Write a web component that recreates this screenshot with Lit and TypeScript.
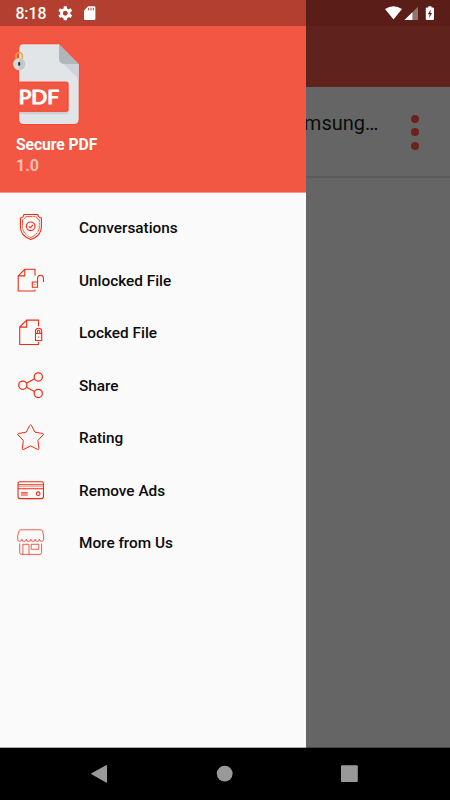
import { LitElement, html, svg, css } from "lit";
import { customElement } from "lit/decorators.js";

const items = [
  {
    label: "Conversations",
    icon: svg`<path d="M8 1.5H21.7Q22.3 4.5 25.4 5V14C25.4 20 20.5 24.5 14.8 26.6C9.1 24.5 4.4 20 4.4 14V5Q7.4 4.5 8 1.5Z"/>
      <path d="M9.5 3.6H20.2Q20.8 6 23.3 6.8V14C23.3 18.8 19 22.8 14.8 24.6C10.6 22.8 6.5 18.8 6.5 14V6.8Q9 6 9.5 3.6Z" stroke-width=".8" stroke-dasharray="7 .7 2 .7"/>
      <circle cx="14.7" cy="13.3" r="4.3"/><path d="M12.7 13.4l1.5 1.4 2.7-3"/>`,
  },
  {
    label: "Unlocked File",
    icon: svg`<path d="M19 9.4V3.3H8.8L2.2 9.9V25H19V23.7M8.8 3.3V9.9H2.2"/>
      <path d="M16.3 16h5.2v5.2h-5.2zM21.6 16v-3.8a2.9 2.9 0 0 1 5.8 0V16"/><path d="M18.5 18.5h.9" stroke-width=".8"/>`,
  },
  {
    label: "Locked File",
    icon: svg`<path d="M22.5 8.3V2.1H10.7L3.7 9.1V26.5H22.5V24M10.7 2.1V9.1H3.7"/>
      <path d="M19.5 15.5h6.2v7h-6.2zM19.5 15.5v-2.2a3.1 3.1 0 0 1 6.2 0v2.2M21.4 15.5v-2a1.2 1.2 0 0 1 2.4 0v2M22.6 18.4v1.2"/>`,
  },
  {
    label: "Share",
    icon: svg`<g stroke-width="1.25"><circle cx="6.8" cy="14.2" r="4.1"/><circle cx="22.3" cy="5.9" r="4.1"/><circle cx="22.3" cy="22.4" r="4.1"/>
      <path d="M10.4 12.2l8.2-4.4M10.4 16.2l8.2 4.3"/></g>`,
  },
  {
    label: "Rating",
    icon: svg`<path d="M13.8 2.4Q14.6 1.2 15.4 2.4L19 9.2L26.8 10.5Q28 10.9 27.2 11.9L21.9 17.4L22.9 25.6Q22.8 27 21.6 26.4L14.6 22.9L7.7 26.4Q6.4 27 6.4 25.6L7.3 17.4L2 11.9Q1.2 10.9 2.4 10.5L10.2 9.2Z" stroke-width="1"/>`,
  },
  {
    label: "Remove Ads",
    icon: svg`<rect x="2" y="5.8" width="25.5" height="16.8" rx="2"/><path d="M2 8.7h25.5M2 12.8h25.5" stroke-width="1.1"/><path d="M2 10.6h25.5" stroke-width=".4"/>
      <path d="M5 16.9h6.7M5 19h6.7"/><circle cx="22.2" cy="17.7" r="1.8"/>`,
  },
  {
    label: "More from Us",
    icon: svg`<g stroke-width=".75"><path d="M4.6 1.8H24.9Q26.1 1.8 26.5 3.2L27.7 8V11.2a2 2 0 0 1-4.2 0a2.2 2.2 0 0 1-4.4 0a2.2 2.2 0 0 1-4.4 0a2.2 2.2 0 0 1-4.4 0a2.2 2.2 0 0 1-4.4 0a2.1 2.1 0 0 1-4.2 0V8L3 3.2Q3.4 1.8 4.6 1.8Z"/>
      <path d="M3.7 15.5V24.6Q3.7 26.4 5.2 26.4H24Q25.6 26.4 25.6 24.6V15.5M6.9 26.4V16.3H13V26.4M15.2 16.3h7.6v5h-7.6z"/></g>`,
  },
];

@customElement("app-root")
export class AppRoot extends LitElement {
  static styles = css`
    :host { display: block; font-family: Roboto, sans-serif; }
    * { box-sizing: border-box; }
    svg { display: block; flex: none; }
    .screen { width: 450px; height: 800px; display: flex; flex-direction: column; overflow: hidden; background: #000; }
    .main { display: flex; height: 748px; }
    .drawer { width: 306px; flex: none; background: #fafafa; display: flex; flex-direction: column; border-bottom: 1px solid #aaa; }
    .page { flex: 1; min-width: 0; background: #656565; border-bottom: 1px solid #444; }
    .status { height: 26px; display: flex; align-items: center; background: #b23f30; color: #fff; padding-left: 15.4px; }
    .time { font-size: 15.8px; font-weight: 500; line-height: 26px; width: 42.6px; padding-top: 1px; }
    .status.dim { background: #5a1d17; padding-left: 78px; }
    .header { height: 166.5px; background: #f25743; color: #fff; padding: 16px 0 0 12px; border-bottom: 1px solid #f79588; }
    .name { font-size: 15.7px; font-weight: 700; line-height: 20px; padding: 9px 0 0 4px; letter-spacing: -.08px; }
    .version { font-size: 16px; font-weight: 700; line-height: 20px; padding-left: 4px; margin-top: 1px; color: #fabcb4; }
    .menu { padding-top: 9.25px; }
    .item { height: 52.5px; display: flex; align-items: center; gap: 33px; padding-left: 16px; font-size: 15.35px; font-weight: 500; color: #0c0c0c; }
    .glyph { fill: none; stroke: #f32a12; stroke-width: 1.1; }
    .toolbar { height: 61px; background: #60221c; }
    .row { height: 91px; border-bottom: 2px solid #5b5b5b; display: flex; }
    .file { width: 72.4px; overflow: hidden; display: flex; justify-content: flex-end; white-space: nowrap; font-size: 20px; line-height: 24px; padding-top: 24px; color: #0b0b0b; }
    .dots { padding: 27.5px 0 0 32.6px; display: flex; flex-direction: column; gap: 5.8px; }
    .dot { width: 8px; height: 8px; border-radius: 50%; background: #6b221b; }
    .nav { height: 52px; }
    .logotext { font-family: Lato, sans-serif; font-weight: 400; font-size: 18.5px; fill: #fff; stroke: #fff; stroke-width: 1.1; stroke-linejoin: round; }
  `;

  render() {
    return html`<div class="screen">
      <div class="main">
        <div class="drawer">
          <div class="status">
            <div class="time">8:18</div>
            <svg width="42" height="26" viewBox="58 0 42 26" fill="#fff">
              <circle cx="65.3" cy="13.2" r="3.7" fill="none" stroke="#fff" stroke-width="3"/>
              <g stroke="#fff" stroke-width="3.2"><path d="M65.3 6.2v3M65.3 17.2v3M59.2 9.7l2.6 1.5M68.8 15.2l2.6 1.5M71.4 9.7l-2.6 1.5M61.8 15.2l-2.6 1.5"/></g>
              <circle cx="65.3" cy="13.2" r="2.3" fill="#b23f30"/>
              <path d="M88.2 6.2h6q1.2 0 1.2 1.2v11.3q0 1.2-1.2 1.2h-9q-1.2 0-1.2-1.2v-8.3z"/>
              <path d="M88.7 7.8v2.6M91 7.8v2.6M93.3 7.8v2.6" stroke="#b23f30" stroke-width="1"/>
            </svg>
          </div>
          <div class="header">
            <svg width="70" height="84" viewBox="12 42 70 84">
              <path d="M23.3 44.3H59L78.7 64V119.3q0 4.7-4.7 4.7H23.8q-4.7 0-4.7-4.7V49q0-4.7 4.2-4.7z" fill="#e1e5e8" stroke="#ff2f0a" stroke-width=".7" paint-order="stroke"/>
              <path d="M59 44.3L78.7 64H64.5Q59 64 59 58z" fill="#b0b6bb"/>
              <path d="M63.8 64H78.7V79z" fill="#cdd2dd"/>
              <path d="M19.1 111.4H68V113q0 1.3-1.3 1.3H19.1z" fill="#cbd0d6"/>
              <path d="M18.6 82H66.7q1.6 0 1.6 1.6V110q0 1.6-1.6 1.6H18.6z" fill="#f25743"/>
              <path d="M19.2 82H66.7q1.4 0 1.4 1.6V110q0 1.4-1.4 1.4H19.2" fill="none" stroke="#fb3a1c" stroke-width=".8"/>
              <text class="logotext" x="18.7" y="103.7" textLength="40.4" lengthAdjust="spacingAndGlyphs">PDF</text>
              <path d="M16 59.5V55.8a3.1 3.1 0 0 1 6.3 0V60" fill="none" stroke="#e6a532" stroke-width="1.4"/>
              <circle cx="19.2" cy="64.1" r="6.1" fill="#d8dada"/><path d="M19.2 58a6.1 6.1 0 0 1 0 12.2z" fill="#c4c8ca"/>
              <path d="M19.2 63v1.7" stroke="#202a3e" stroke-width="2.1" stroke-linecap="round"/>
            </svg>
            <div class="name">Secure PDF</div>
            <div class="version">1.0</div>
          </div>
          <div class="menu">
            ${items.map((i) => html`<div class="item">
              <svg class="glyph" width="30" height="30" viewBox="0 0 30 30">${i.icon}</svg>
              <span>${i.label}</span>
            </div>`)}
          </div>
        </div>
        <div class="page">
          <div class="status dim">
            <svg width="58" height="26" viewBox="384 0 58 26" fill="#fff">
              <path d="M385 9Q393.5 3.4 402 9L393.5 19.4z"/>
              <path d="M418 6.7V20H404.5z" fill="#947470"/><path d="M412.4 12.2V20H404.5z"/>
              <path d="M428.3 6.2h3.2v1.3h1.5q1 0 1 1V19q0 1-1 1h-6.2q-1 0-1-1V8.5q0-1 1-1h1.5z"/>
              <path d="M431 9.3l-3.2 4.9h1.9l-.8 3.8 3.2-5h-1.9z" fill="#5a1d17"/>
            </svg>
          </div>
          <div class="toolbar"></div>
          <div class="row">
            <div class="file">msung…</div>
            <div class="dots"><div class="dot"></div><div class="dot"></div><div class="dot"></div></div>
          </div>
        </div>
      </div>
      <svg class="nav" width="450" height="52" viewBox="0 748 450 52" fill="#999">
        <path d="M106 765.2q1-.6 1 .5v16.2q0 1.2-1 .6L91.5 774.2q-.8-.5 0-1z"/>
        <circle cx="224.7" cy="773.6" r="7.9"/><rect x="341" y="765.3" width="16.8" height="16.7" rx="1"/>
      </svg>
    </div>`;
  }
}
